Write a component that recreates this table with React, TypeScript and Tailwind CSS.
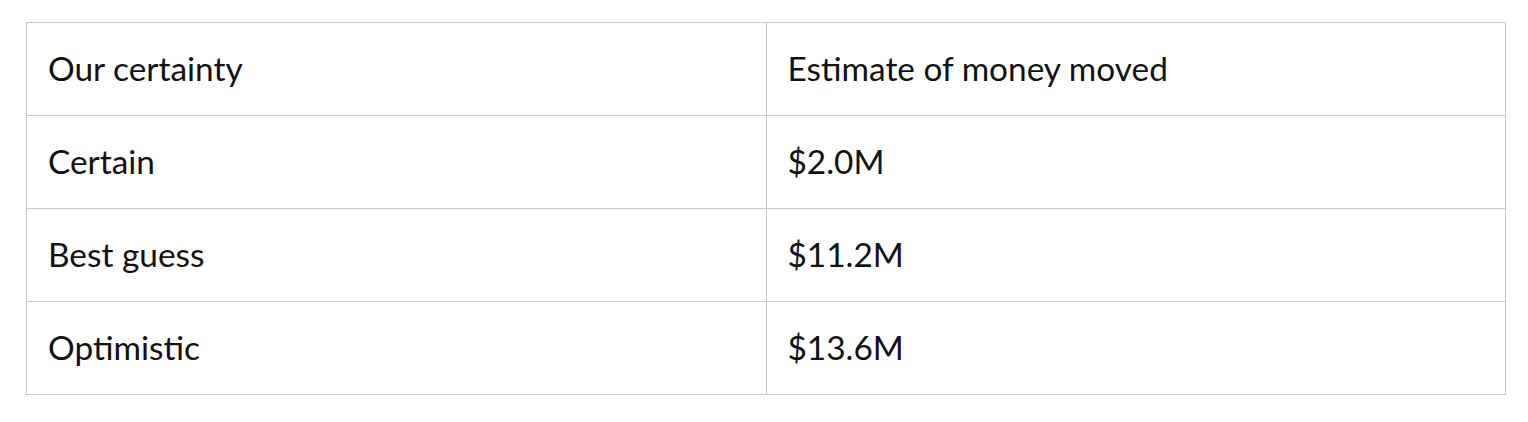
const rows: [string, string][] = [
  ['Our certainty', 'Estimate of money moved'],
  ['Certain', '$2.0M'],
  ['Best guess', '$11.2M'],
  ['Optimistic', '$13.6M'],
];

export default function App() {
  return (
    <div className="bg-white w-[1528px] h-[422px] pt-[22px] pl-[26px]" style={{ fontFamily: 'Lato, "Liberation Sans", sans-serif' }}>
      <table className="w-[1480px] border-collapse table-fixed text-[33.4px] leading-none font-normal text-[#111]">
        <tbody>
          {rows.map(([a, b]) => (
            <tr key={a} className="h-[93px]">
              <td className="border border-[#c8c8c8] pl-[21px] align-middle">{a}</td>
              <td className="border border-[#c8c8c8] pl-[21px] align-middle">{b}</td>
            </tr>
          ))}
        </tbody>
      </table>
    </div>
  );
}
